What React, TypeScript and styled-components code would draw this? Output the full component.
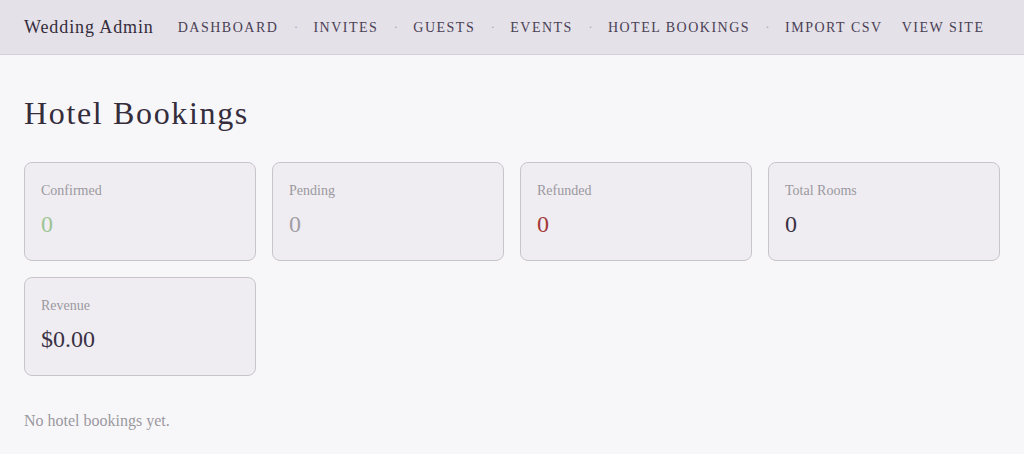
import styled, { createGlobalStyle } from "styled-components";

const GlobalStyle = createGlobalStyle`
  html, body {
    margin: 0;
    padding: 0;
    background: #f7f7f9;
    font-family: "Liberation Serif", "Times New Roman", serif;
    color: #352c3c;
  }
`;

const Header = styled.header`
  height: 55px;
  box-sizing: border-box;
  display: flex;
  align-items: center;
  padding: 1px 24px 0;
  background: #e4e1e8;
  border-bottom: 1px solid #d3d0d8;
`;

const Brand = styled.div`
  font-size: 18px;
  letter-spacing: 0.9px;
  color: #352c3c;
  margin-right: 24px;
`;

const Nav = styled.nav`
  display: flex;
  align-items: center;
`;

const NavLink = styled.a`
  font-size: 14px;
  letter-spacing: 1.5px;
  text-transform: uppercase;
  color: #4a4055;
  text-decoration: none;
`;

const Dot = styled.span`
  color: #a8a3ae;
  font-size: 12px;
  padding: 0 15.5px;
`;

const Spacer = styled.span`
  width: 19px;
`;

const Main = styled.main`
  padding: 24px 24px;
`;

const Title = styled.h1`
  margin: 16px 0 30px;
  font-size: 32px;
  font-weight: 400;
  letter-spacing: 1.65px;
  color: #352c3c;
`;

const Grid = styled.div`
  display: grid;
  grid-template-columns: repeat(4, 1fr);
  gap: 16px;
`;

const Card = styled.div`
  height: 99px;
  box-sizing: border-box;
  padding: 20px 16px;
  background: #efedf1;
  border: 1px solid #c8c4cc;
  border-radius: 8px;
`;

const Label = styled.div`
  font-size: 14px;
  color: #9b98a0;
`;

const Value = styled.div<{ $tone?: string }>`
  margin-top: 12px;
  font-size: 24px;
  color: ${(p) => p.$tone || "#3b3145"};
`;

const Empty = styled.p`
  margin: 36px 0 0;
  font-size: 16px;
  color: #9b98a0;
`;

const links = ["Dashboard", "Invites", "Guests", "Events", "Hotel Bookings", "Import CSV"];

const stats = [
  { label: "Confirmed", value: "0", tone: "#9cc493" },
  { label: "Pending", value: "0", tone: "#a19ea6" },
  { label: "Refunded", value: "0", tone: "#a33a3a" },
  { label: "Total Rooms", value: "0" },
  { label: "Revenue", value: "$0.00" },
];

const App = () => {
  return (
    <>
      <GlobalStyle />
      <Header>
        <Brand>Wedding Admin</Brand>
        <Nav>
          {links.map((link, index) => (
            <span key={link} style={{ display: "contents" }}>
              <NavLink href="#">{link}</NavLink>
              {index < links.length - 1 && <Dot>·</Dot>}
            </span>
          ))}
          <Spacer />
          <NavLink href="#">View Site</NavLink>
        </Nav>
      </Header>
      <Main>
        <Title>Hotel Bookings</Title>
        <Grid>
          {stats.map((s) => (
            <Card key={s.label}>
              <Label>{s.label}</Label>
              <Value $tone={s.tone}>{s.value}</Value>
            </Card>
          ))}
        </Grid>
        <Empty>No hotel bookings yet.</Empty>
      </Main>
    </>
  );
};

export default App;
